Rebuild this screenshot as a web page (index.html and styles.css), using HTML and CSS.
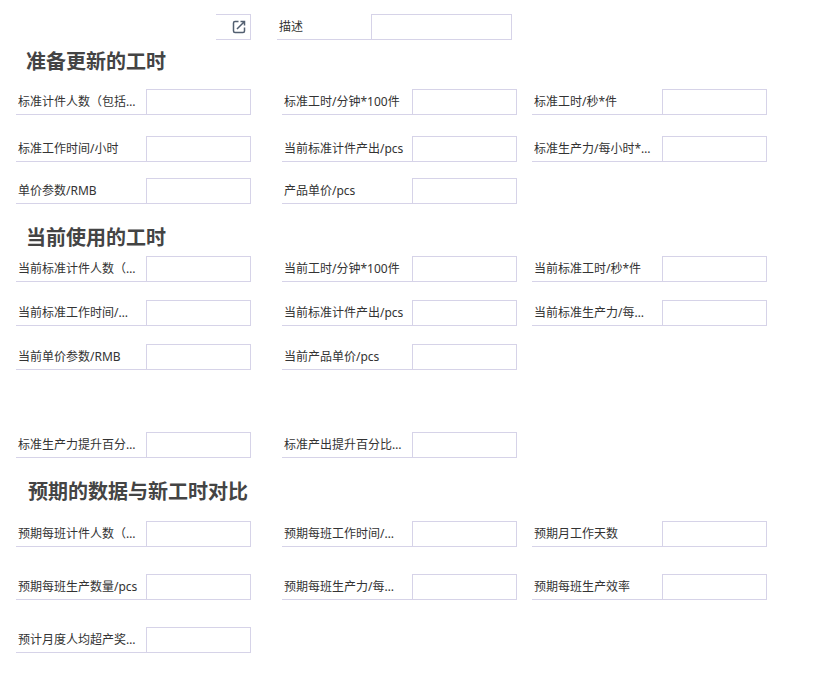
FILE: index.html
```html
<!DOCTYPE html>
<html lang="zh-CN">
<head>
<meta charset="utf-8">
<meta name="viewport" content="width=device-width, initial-scale=1">
<title>标准工时</title>
<link rel="stylesheet" href="styles.css">
</head>
<body>
<form class="form">
  <div class="top">
    <button class="open" type="button" aria-label="打开">
      <svg viewBox="0 0 14 14" width="14" height="14" fill="none" stroke="#525f70" stroke-width="1.5" aria-hidden="true">
        <path d="M6.5 1.5H3Q1.5 1.5 1.5 3V11Q1.5 12.5 3 12.5H11Q12.5 12.5 12.5 11V7.5"/>
        <path d="M5 9L12 2M8.5 1.5H12.5V5.5"/>
      </svg>
    </button>
    <div class="field field-description"><label for="desc">描述</label><input id="desc" type="text"></div>
  </div>

  <h2 class="title-next">准备更新的工时</h2>
  <div class="row">
    <div class="field"><label for="a1">标准计件人数（包括…</label><input id="a1" type="text"></div>
    <div class="field"><label for="a2">标准工时/分钟*100件</label><input id="a2" type="text"></div>
    <div class="field"><label for="a3">标准工时/秒*件</label><input id="a3" type="text"></div>
  </div>
  <div class="row space-l">
    <div class="field"><label for="a4">标准工作时间/小时</label><input id="a4" type="text"></div>
    <div class="field"><label for="a5">当前标准计件产出/pcs</label><input id="a5" type="text"></div>
    <div class="field"><label for="a6">标准生产力/每小时*…</label><input id="a6" type="text"></div>
  </div>
  <div class="row space-s">
    <div class="field"><label for="a7">单价参数/RMB</label><input id="a7" type="text"></div>
    <div class="field"><label for="a8">产品单价/pcs</label><input id="a8" type="text"></div>
  </div>

  <h2 class="title-current">当前使用的工时</h2>
  <div class="row">
    <div class="field"><label for="b1">当前标准计件人数（…</label><input id="b1" type="text"></div>
    <div class="field"><label for="b2">当前工时/分钟*100件</label><input id="b2" type="text"></div>
    <div class="field"><label for="b3">当前标准工时/秒*件</label><input id="b3" type="text"></div>
  </div>
  <div class="row space-m">
    <div class="field"><label for="b4">当前标准工作时间/…</label><input id="b4" type="text"></div>
    <div class="field"><label for="b5">当前标准计件产出/pcs</label><input id="b5" type="text"></div>
    <div class="field"><label for="b6">当前标准生产力/每…</label><input id="b6" type="text"></div>
  </div>
  <div class="row space-m">
    <div class="field"><label for="b7">当前单价参数/RMB</label><input id="b7" type="text"></div>
    <div class="field"><label for="b8">当前产品单价/pcs</label><input id="b8" type="text"></div>
  </div>
  <div class="row space-break">
    <div class="field"><label for="b9">标准生产力提升百分…</label><input id="b9" type="text"></div>
    <div class="field"><label for="b10">标准产出提升百分比…</label><input id="b10" type="text"></div>
  </div>

  <h2 class="title-compare">预期的数据与新工时对比</h2>
  <div class="row">
    <div class="field"><label for="c1">预期每班计件人数（…</label><input id="c1" type="text"></div>
    <div class="field"><label for="c2">预期每班工作时间/…</label><input id="c2" type="text"></div>
    <div class="field"><label for="c3">预期月工作天数</label><input id="c3" type="text"></div>
  </div>
  <div class="row space-xl">
    <div class="field"><label for="c4">预期每班生产数量/pcs</label><input id="c4" type="text"></div>
    <div class="field"><label for="c5">预期每班生产力/每…</label><input id="c5" type="text"></div>
    <div class="field"><label for="c6">预期每班生产效率</label><input id="c6" type="text"></div>
  </div>
  <div class="row space-xl">
    <div class="field"><label for="c7">预计月度人均超产奖…</label><input id="c7" type="text"></div>
  </div>
</form>
</body>
</html>
```
FILE: styles.css
```css
* { box-sizing: border-box; }

body {
  margin: 0;
  background: #fff;
  color: #333;
  font: 12px/26px "Noto Sans", "Noto Sans CJK SC", sans-serif;
}

.form { padding: 14px 0 40px 16px; }

.top {
  display: flex;
  gap: 26px;
  padding-left: 200px;
}

.open {
  display: flex;
  align-items: center;
  justify-content: flex-end;
  width: 35px;
  height: 26px;
  padding: 0 4px;
  border: 1px solid #d6d3e8;
  border-left: 0;
  background: #fff;
}

h2 {
  margin: 0;
  padding-left: 10px;
  color: #444;
  font-size: 20px;
  font-weight: 700;
  line-height: 28px;
}

.title-next { margin: 8px 0 13px; }
.title-current { margin: 20px 0 4px; }
.title-compare { margin: 20px 0 15px; padding-left: 12px; }

.row {
  display: grid;
  grid-template-columns: 266fr 250fr 281fr;
}

.space-s { margin-top: 16px; }
.space-m { margin-top: 18px; }
.space-l { margin-top: 21px; }
.space-xl { margin-top: 27px; }
.space-break { margin-top: 62px; }

.field {
  display: flex;
  width: 100%;
  max-width: 235px;
  height: 26px;
}

.field label {
  flex: 0 0 130px;
  padding-left: 2px;
  border-bottom: 1px solid #d6d3e8;
  white-space: nowrap;
}

.field input {
  flex: 1;
  min-width: 0;
  padding: 0 4px;
  border: 1px solid #d6d3e8;
  border-radius: 0;
  background: #fff;
  font: inherit;
}

.field-description label { flex-basis: 94px; }
```
